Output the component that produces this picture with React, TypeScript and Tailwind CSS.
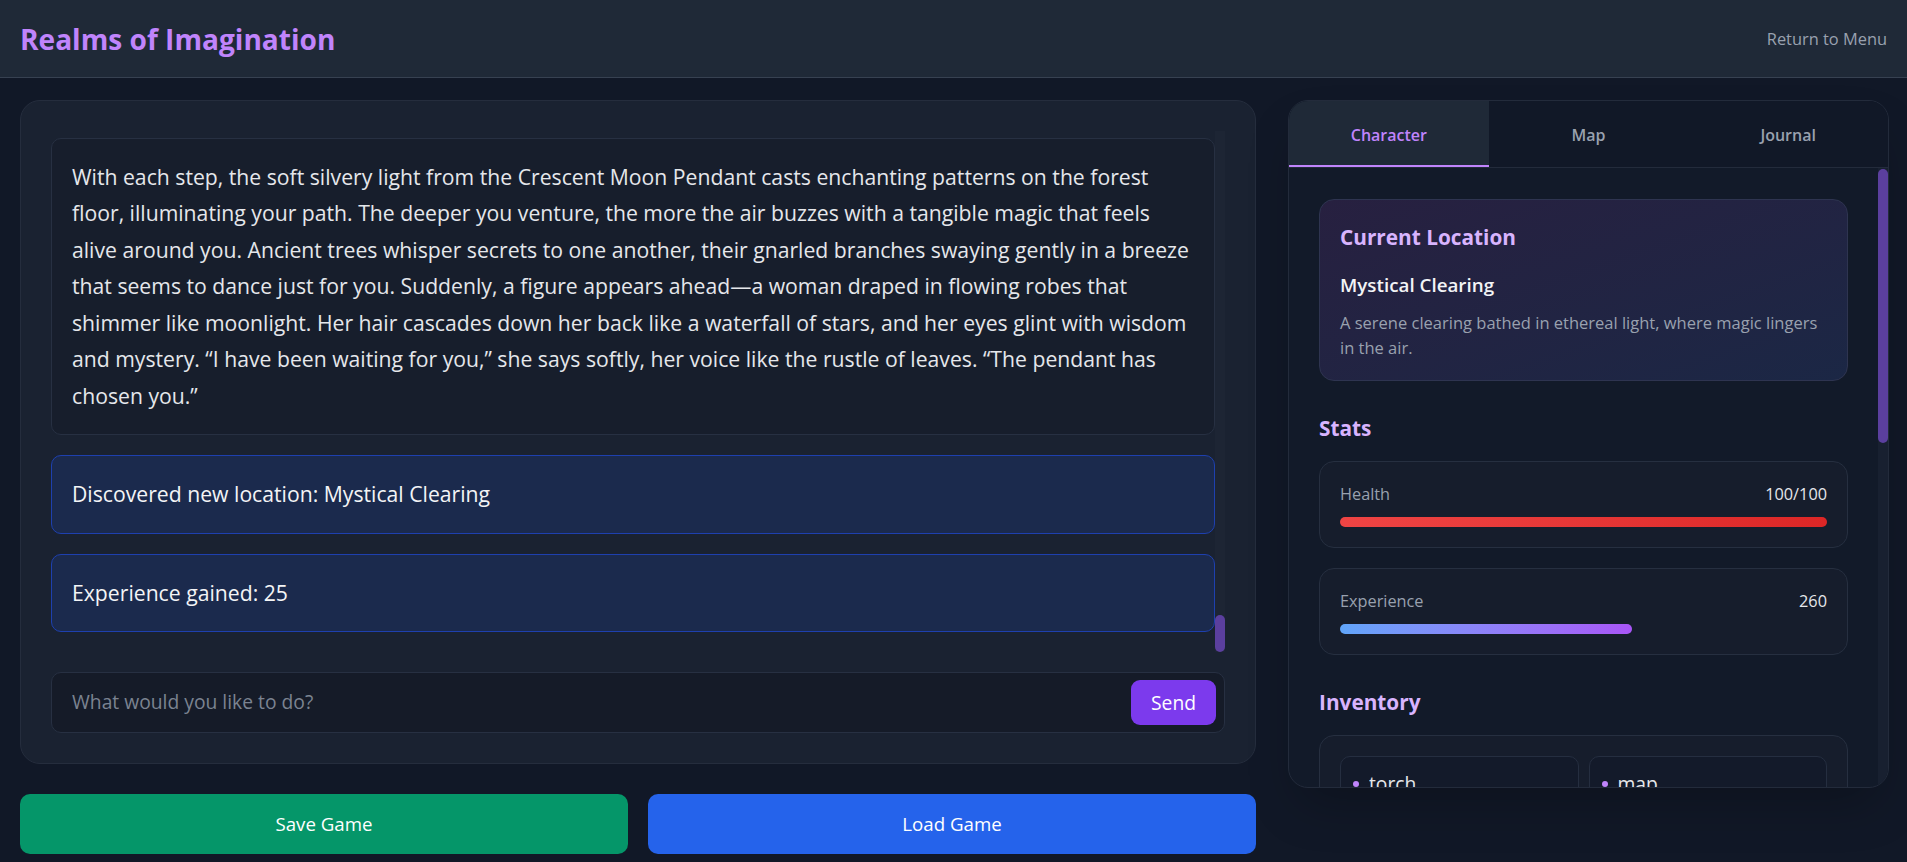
import { useLayoutEffect, useRef } from "react";

type Msg = { kind: "narrative" | "system" | "player"; text: string };

const messages: Msg[] = [
  {
    kind: "narrative",
    text: "The pendant around your neck grows warm. Runes you have never seen before flicker across its surface, shifting like reflections on a pond, before settling into the shape of a crescent moon.",
  },
  { kind: "player", text: "I follow the light of the pendant deeper into the forest." },
  {
    kind: "narrative",
    text: "With each step, the soft silvery light from the Crescent Moon Pendant casts enchanting patterns on the forest floor, illuminating your path. The deeper you venture, the more the air buzzes with a tangible magic that feels alive around you. Ancient trees whisper secrets to one another, their gnarled branches swaying gently in a breeze that seems to dance just for you. Suddenly, a figure appears ahead\u2014a woman draped in flowing robes that shimmer like moonlight. Her hair cascades down her back like a waterfall of stars, and her eyes glint with wisdom and mystery. \u201CI have been waiting for you,\u201D she says softly, her voice like the rustle of leaves. \u201CThe pendant has chosen you.\u201D",
  },
  { kind: "system", text: "Discovered new location: Mystical Clearing" },
  { kind: "system", text: "Experience gained: 25" },
];

function MessageCard({ m }: { m: Msg }) {
  if (m.kind === "system") {
    return (
      <div className="rounded-[10px] border border-[#1e40af] bg-[#1b2a4d] p-5 text-[21.2px] leading-[36.5px] text-gray-100">
        {m.text}
      </div>
    );
  }
  if (m.kind === "player") {
    return (
      <div className="ml-auto w-fit max-w-[80%] rounded-[10px] border border-[#5b3f9e] bg-[#2a2048] p-5 text-[21.2px] leading-[36.5px] text-purple-100">
        {m.text}
      </div>
    );
  }
  return (
    <div className="rounded-[10px] border border-[#273042] bg-[#171e2c] p-5 text-[21.2px] leading-[36.5px] text-gray-200">
      {m.text}
    </div>
  );
}

function StatCard({
  label,
  value,
  percent,
  bar,
}: {
  label: string;
  value: string;
  percent: number;
  bar: string;
}) {
  return (
    <div className="rounded-[15px] border border-[#262f40] bg-[#161d2c] p-5">
      <div className="mb-[10px] flex items-center justify-between text-[16.3px] leading-[25px]">
        <span className="text-gray-400">{label}</span>
        <span className="text-gray-200">{value}</span>
      </div>
      <div className="h-[10px] w-full rounded-full">
        <div className={`h-full rounded-full ${bar}`} style={{ width: `${percent}%` }} />
      </div>
    </div>
  );
}

const inventory = ["torch", "map", "crescent moon pendant", "rope", "healing herbs", "rations"];

export default function App() {
  const logRef = useRef<HTMLDivElement>(null);

  useLayoutEffect(() => {
    const el = logRef.current;
    if (el) el.scrollTop = el.scrollHeight;
  }, []);

  return (
    <div className="flex h-screen flex-col overflow-hidden bg-[#111827] font-['Open_Sans',sans-serif] text-gray-100">
      <header className="flex h-[78px] shrink-0 items-center justify-between border-b border-[#374151] bg-[#1f2937] px-5">
        <h1 className="text-[28.1px] font-bold leading-[40px] text-[#c084fc]">Realms of Imagination</h1>
        <button className="text-[16.4px] leading-[25px] text-gray-400">Return to Menu</button>
      </header>

      <main className="flex items-start gap-[32px] pl-5 pr-[18px] pt-[22px]">
        <div className="flex flex-1 flex-col gap-[30px]">
          <section className="flex h-[664px] flex-col gap-5 rounded-[20px] border border-[#252d3d] bg-[#1a2231] p-[30px]">
            <div className="relative min-h-0 flex-1">
              <div ref={logRef} className="h-full overflow-y-auto pr-[10px] [scrollbar-width:none]">
                <div className="flex flex-col gap-5">
                  {messages.map((m, i) => (
                    <MessageCard key={i} m={m} />
                  ))}
                  <div />
                </div>
              </div>
              <div className="absolute bottom-0 right-0 top-0 w-[10px] bg-[#1d2534]">
                <div className="absolute bottom-0 left-0 h-[37px] w-full rounded-full bg-[#5b3f9e]" />
              </div>
            </div>

            <form className="flex h-[61px] shrink-0 items-center rounded-[10px] border border-[#273042] bg-[#151b28] py-[7px] pl-[7px] pr-[8px]">
              <input
                type="text"
                placeholder="What would you like to do?"
                className="min-w-0 flex-1 bg-transparent pl-[13px] text-[19.3px] text-gray-200 outline-none placeholder:text-[#7b8391]"
              />
              <button
                type="button"
                className="h-[45px] w-[85px] rounded-[9px] bg-[#7c3aed] text-[19.3px] leading-[30px] text-white"
              >
                Send
              </button>
            </form>
          </section>

          <div className="grid grid-cols-2 gap-5">
            <button className="h-[60px] rounded-[10px] bg-[#059669] text-[18.7px] font-medium text-white">
              Save Game
            </button>
            <button className="h-[60px] rounded-[10px] bg-[#2563eb] text-[18.7px] font-medium text-white">
              Load Game
            </button>
          </div>
        </div>

        <aside className="flex h-[688px] w-[601px] shrink-0 flex-col overflow-hidden rounded-[20px] border border-[#232b3b] bg-[#121a29] shadow-2xl">
          <div className="grid shrink-0 grid-cols-3 border-b border-[#232b3b] bg-[#111827]">
            <button className="h-[66px] border-b-2 border-[#c084fc] bg-[#1f2937] pt-[4px] text-[16px] font-semibold text-[#c084fc]">
              Character
            </button>
            <button className="h-[66px] border-b-2 border-transparent pt-[4px] text-[16px] font-semibold text-gray-400">
              Map
            </button>
            <button className="h-[66px] border-b-2 border-transparent pt-[4px] text-[16px] font-semibold text-gray-400">
              Journal
            </button>
          </div>

          <div className="relative min-h-0 flex-1">
            <div className="h-full overflow-y-auto pb-[30px] pl-[30px] pr-[40px] pt-[31px] [scrollbar-width:none]">
              <div className="flex flex-col gap-[30px]">
                <div className="rounded-[15px] border border-[#2e3450] bg-linear-to-br from-[#272040] to-[#1b2745] p-5">
                  <h3 className="mb-[15px] text-[20.8px] font-bold leading-[35px] text-[#d8b4fe]">Current Location</h3>
                  <h4 className="mb-[10px] text-[18.8px] font-semibold leading-[30px] text-gray-100">Mystical Clearing</h4>
                  <p className="text-[16.5px] leading-[25px] text-gray-400">
                    A serene clearing bathed in ethereal light, where magic lingers in the air.
                  </p>
                </div>

                <div>
                  <h3 className="mb-[15px] text-[20.8px] font-bold leading-[35px] text-[#d8b4fe]">Stats</h3>
                  <div className="flex flex-col gap-5">
                    <StatCard label="Health" value="100/100" percent={100} bar="bg-linear-to-r from-[#ef4444] to-[#dc2626]" />
                    <StatCard label="Experience" value="260" percent={60} bar="bg-linear-to-r from-[#60a5fa] to-[#a855f7]" />
                  </div>
                </div>

                <div>
                  <h3 className="mb-[15px] text-[20.8px] font-bold leading-[35px] text-[#d8b4fe]">Inventory</h3>
                  <div className="rounded-[15px] border border-[#262f40] bg-[#161d2c] p-5">
                    <div className="grid grid-cols-2 gap-[10px]">
                      {inventory.map((item) => (
                        <div
                          key={item}
                          className="flex items-center rounded-[10px] border border-[#252e40] bg-[#131a2a] px-3 py-[12px]"
                        >
                          <span className="mr-[10px] h-[6px] w-[6px] shrink-0 rounded-full bg-[#c084fc]" />
                          <span className="truncate text-[19.3px] leading-[30px] text-gray-200">{item}</span>
                        </div>
                      ))}
                    </div>
                  </div>
                </div>

                <div>
                  <h3 className="mb-[15px] text-[20.8px] font-bold leading-[35px] text-[#d8b4fe]">Active Quests</h3>
                  <div className="flex flex-col gap-[15px]">
                    <div className="rounded-[15px] border border-[#262f40] bg-[#161d2c] p-5">
                      <h4 className="mb-[10px] text-[18.8px] font-semibold leading-[30px] text-gray-100">The Moonlit Path</h4>
                      <p className="text-[16.5px] leading-[25px] text-gray-400">
                        Follow the light of the Crescent Moon Pendant to discover its purpose.
                      </p>
                    </div>
                  </div>
                </div>
              </div>
            </div>
            <div className="absolute bottom-0 right-0 top-0 w-[10px] bg-[#182030]">
              <div className="absolute left-0 top-[1px] h-[274px] w-full rounded-full bg-[#5b3f9e]" />
            </div>
          </div>
        </aside>
      </main>
    </div>
  );
}
